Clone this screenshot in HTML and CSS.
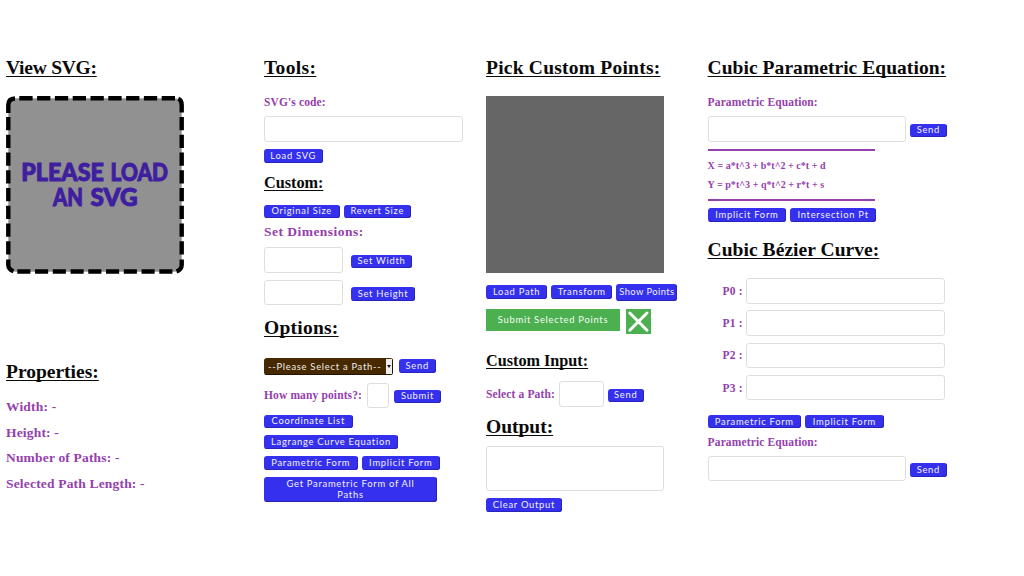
FILE: index.html
```html
<!DOCTYPE html>
<html lang="en">
<head>
<meta charset="utf-8">
<title>SVG Tools</title>
<link rel="stylesheet" href="styles.css">
</head>
<body>
<main class="page">
  <section class="col col-view">
    <h2 class="title t-view">View SVG:</h2>
    <svg class="preview" viewBox="0 0 178 178" role="img">
      <rect x="2.3" y="2.3" width="173.4" height="173.4" rx="7" fill="#919191"/>
      <g fill="none" stroke="#000" stroke-width="4.4">
        <path d="M13.3 2.3H169.2" stroke-dasharray="13.3 4.5"/>
        <path d="M2.3 21V158.7M175.7 21V158.7" stroke-dasharray="13.3 4.46"/>
        <path d="M11.3 175.5H166.5" stroke-dasharray="13.1 4.65"/>
        <path d="M2.3 17V9Q2.3 2.8 9 2.5M172.3 2.8Q175.7 4 175.7 9V16.5M2.3 163.5V169Q2.5 173.5 7.5 175.3M175.7 163.5V169Q175.5 174 170.5 175.3"/>
      </g>
      <g class="preview-text">
        <text x="15.3" y="84.5" textLength="82.5" lengthAdjust="spacingAndGlyphs">PLEASE</text>
        <text x="104.5" y="84.5" textLength="57.5" lengthAdjust="spacingAndGlyphs">LOAD</text>
        <text x="47" y="109.5" textLength="30" lengthAdjust="spacingAndGlyphs">AN</text>
        <text x="84.5" y="109.5" textLength="47" lengthAdjust="spacingAndGlyphs">SVG</text>
      </g>
    </svg>
    <h2 class="title t-props">Properties:</h2>
    <div class="props">
      <p>Width: -</p><p>Height: -</p><p>Number of Paths: -</p><p>Selected Path Length: -</p>
    </div>
  </section>

  <section class="col col-tools">
    <h2 class="title t-tools">Tools:</h2>
    <label class="label l-first">SVG's code:</label>
    <input class="field wide f-first">
    <button class="btn w-load">Load SVG</button>
    <h3 class="subtitle s-custom">Custom:</h3>
    <div class="row r-size"><button class="btn w-original">Original Size</button><button class="btn w-revert">Revert Size</button></div>
    <p class="dimensions">Set Dimensions:</p>
    <div class="row r-width"><input class="field dim"><button class="btn w-setw">Set Width</button></div>
    <div class="row r-height"><input class="field dim"><button class="btn w-seth">Set Height</button></div>
    <h2 class="title t-options">Options:</h2>
    <div class="row r-select">
      <div class="select"><span>--Please Select a Path--</span><i class="arrow"></i></div>
      <button class="btn send">Send</button>
    </div>
    <div class="row r-points"><label class="label many">How many points?:</label><input class="field count"><button class="btn w-submit">Submit</button></div>
    <button class="btn w-coord">Coordinate List</button>
    <button class="btn w-lagrange">Lagrange Curve Equation</button>
    <div class="row r-forms"><button class="btn w-param">Parametric Form</button><button class="btn w-implicit">Implicit Form</button></div>
    <button class="btn w-all">Get Parametric Form of All<br>Paths</button>
  </section>

  <section class="col col-pick">
    <h2 class="title t-pick">Pick Custom Points:</h2>
    <div class="canvas"></div>
    <div class="row r-pick"><button class="btn w-path">Load Path</button><button class="btn w-path">Transform</button><button class="btn w-show">Show Points</button></div>
    <div class="row r-green">
      <button class="green">Submit Selected Points</button>
      <button class="close"><svg viewBox="0 0 25 25"><path d="M3.8 4 21 21.2M21 4 3.8 21.2" stroke="#fff" stroke-width="3" stroke-linecap="round"/></svg></button>
    </div>
    <h3 class="subtitle s-input">Custom Input:</h3>
    <div class="row r-path"><label class="label select-path">Select a Path:</label><input class="field path"><button class="btn send">Send</button></div>
    <h2 class="title t-output">Output:</h2>
    <div class="field output"></div>
    <button class="btn w-clear">Clear Output</button>
  </section>

  <section class="col col-cubic">
    <h2 class="title t-cubic">Cubic Parametric Equation:</h2>
    <label class="label l-first">Parametric Equation:</label>
    <div class="row r-eq"><input class="field wide"><button class="btn send">Send</button></div>
    <div class="formula"><p>X = a*t^3 + b*t^2 + c*t + d</p><p>Y = p*t^3 + q*t^2 + r*t + s</p></div>
    <div class="row r-cubic"><button class="btn w-implicit">Implicit Form</button><button class="btn w-inter">Intersection Pt</button></div>
    <h2 class="title t-bezier">Cubic Bézier Curve:</h2>
    <div class="points">
      <div class="row"><label class="label">P0 :</label><input class="field wide"></div>
      <div class="row"><label class="label">P1 :</label><input class="field wide"></div>
      <div class="row"><label class="label">P2 :</label><input class="field wide"></div>
      <div class="row"><label class="label">P3 :</label><input class="field wide"></div>
    </div>
    <div class="row r-bezier"><button class="btn w-param">Parametric Form</button><button class="btn w-implicit">Implicit Form</button></div>
    <label class="label l-bezier">Parametric Equation:</label>
    <div class="row r-eq r-last"><input class="field wide"><button class="btn send">Send</button></div>
  </section>
</main>
</body>
</html>
```

FILE: styles.css
```css
* { box-sizing: border-box; }
body { margin: 0; background: #fff; font-family: "Liberation Serif", serif; overflow: hidden; }
h2, h3, p { margin: 0; }
.page { display: grid; grid-template-columns: 258px 222px 221.6px 260px; padding: 55px 0 0 6px; height: 576px; }
.col { display: flex; flex-direction: column; align-items: flex-start; }
.row { display: flex; align-items: center; gap: 4px; }

.title { font-size: 19.5px; line-height: 26px; height: 24px; font-weight: bold; color: #0a0a0a; white-space: nowrap; }
.title, .subtitle { text-decoration: underline; text-decoration-thickness: 1.3px; text-underline-offset: 1.5px; text-decoration-skip-ink: none; }
.subtitle { font-size: 16.2px; line-height: 20px; height: 20px; font-weight: bold; color: #0a0a0a; white-space: nowrap; }
.label { font-size: 11.5px; line-height: 16px; letter-spacing: .13px; font-weight: bold; color: #9440ad; white-space: nowrap; }
.field { display: block; margin: 0; padding: 0; height: 25.5px; border: 1px solid #dedede; border-radius: 3px; background: #fff; flex: none; }
.wide { width: 198.5px; }
.btn { flex: none; height: 13.5px; margin: 0; padding: 0 0 1px; border: 0; border-radius: 3px; background: #3530ed; box-shadow: inset -1px -1px 0 #2924b9; color: #f2f2ff; font: 9.4px/11px Lato, sans-serif; letter-spacing: .73px; text-align: center; white-space: nowrap; }
.send { width: 36.5px; }

.t-view { letter-spacing: -.25px; }
.t-tools { letter-spacing: .35px; }
.t-pick { letter-spacing: .23px; }
.t-cubic { letter-spacing: .05px; }
.t-options { letter-spacing: .25px; }

.preview { display: block; width: 178px; height: 178px; margin-top: 16.5px; }
.preview-text { font: 900 24px Lato, sans-serif; fill: #3f1f9f; stroke: #3f1f9f; stroke-width: 1px; }
.t-props { margin-top: 85.5px; }
.props { margin-top: 10.8px; font-size: 13.5px; line-height: 25.7px; letter-spacing: .18px; font-weight: bold; color: #9440ad; }

.l-first { margin-top: 15px; }
.f-first { margin-top: 6px; }
.w-load { width: 58.5px; margin-top: 7.5px; }
.s-custom { margin-top: 10px; }
.r-size { margin-top: 12px; }
.w-original { width: 75.5px; }
.w-revert { width: 67.5px; }
.dimensions { margin-top: 6px; font-size: 13.5px; line-height: 16px; letter-spacing: .47px; font-weight: bold; color: #9440ad; }
.r-width { margin-top: 7px; gap: 8px; }
.r-height { margin-top: 7px; gap: 8px; }
.dim { width: 79px; }
.r-width .btn, .r-height .btn { margin-top: 3px; }
.w-setw { width: 61px; }
.w-seth { width: 64px; }
.t-options { margin-top: 9.5px; letter-spacing: .25px; }
.r-select { margin-top: 19px; gap: 6px; }
.select { display: flex; align-items: center; justify-content: space-between; width: 129px; height: 17px; padding: 0 1px 0 4px; border-radius: 3px; background: #472900; box-shadow: inset -1px -1px 0 #241400; color: #eee; font: 9.4px/15px Lato, sans-serif; letter-spacing: .73px; white-space: nowrap; }
.arrow { display: flex; align-items: center; justify-content: center; flex: none; width: 6px; height: 15px; background: #eee; }
.arrow::after { content: ""; border: 2px solid transparent; border-top: 3px solid #111; border-bottom: 0; }
.r-points { margin-top: 8px; }
.many { width: 99px; }
.count { width: 22px; }
.r-points .btn { margin-left: 1px; margin-top: 2px; }
.w-submit { width: 47px; }
.w-coord { width: 88.5px; margin-top: 6.5px; }
.w-lagrange { width: 134px; margin-top: 7px; }
.r-forms { margin-top: 7.5px; }
.w-param { width: 93.5px; }
.w-implicit { width: 78.5px; }
.w-all { width: 173px; height: 24.5px; margin-top: 7.5px; }

.canvas { width: 177.5px; height: 177.5px; margin-top: 16.5px; background: #666; }
.r-pick { margin-top: 10.5px; height: 17px; }
.w-path { width: 61.2px; }
.w-show { width: 61px; height: 17px; padding-left: 0; padding-right: 0; letter-spacing: .43px; }
.r-green { margin-top: 8px; gap: 6px; align-items: flex-start; }
.green { width: 134px; height: 22.5px; margin: 0; padding: 0; border: 0; background: #4caf50; color: #f4fff4; font: 9.4px/22px Lato, sans-serif; letter-spacing: .73px; white-space: nowrap; }
.close { width: 25px; height: 25px; margin: 0; padding: 0; border: 0; background: #4caf50; }
.close svg { display: block; width: 25px; height: 25px; }
.s-input { margin-top: 17.5px; }
.r-path { margin-top: 10px; }
.select-path { width: 69px; }
.path { width: 44.5px; }
.r-path .btn { margin-top: 3px; }
.t-output { margin-top: 7.5px; }
.output { width: 177.5px; height: 44.5px; margin-top: 8px; }
.w-clear { width: 76px; margin-top: 7.5px; }

.r-eq { margin-top: 6px; }
.r-eq .btn { margin-top: 3px; }
.formula { width: 167.5px; height: 52px; margin-top: 7.5px; padding-top: 4.8px; border-top: 2px solid #9440ad; border-bottom: 2px solid #9440ad; color: #9440ad; font-size: 10px; font-weight: bold; line-height: 19.4px; letter-spacing: .03px; white-space: nowrap; }
.formula p { height: 19.4px; }
.r-cubic { margin-top: 7px; }
.w-inter { width: 86px; }
.t-bezier { margin-top: 15.5px; letter-spacing: .05px; }
.points { display: grid; gap: 6.8px; margin: 17px 0 0 15px; }
.points .label { width: 19.5px; }
.r-bezier { margin-top: 14.5px; }
.l-bezier { margin-top: 5.5px; }
```
